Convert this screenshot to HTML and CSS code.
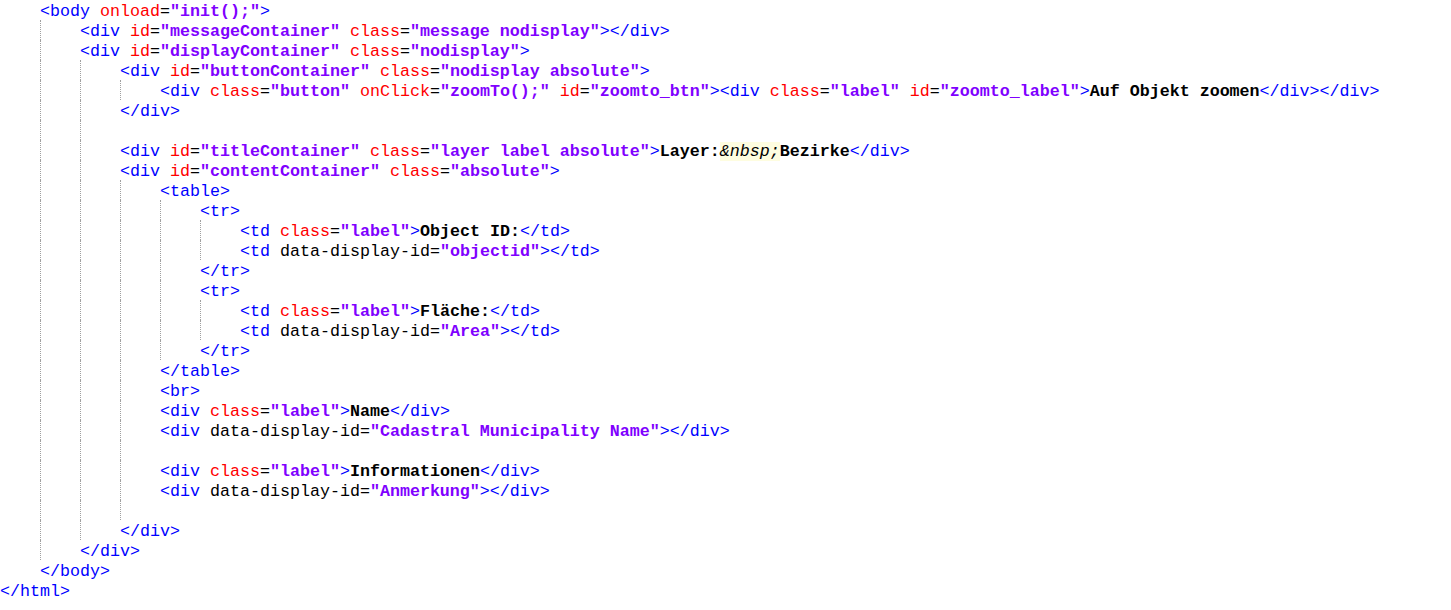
FILE: index.html
```html
<!DOCTYPE html>
<html>
<head>
<meta charset="utf-8">
<link rel="stylesheet" href="styles.css">
</head>
<body>
<div class="editor">
<div class="ln"><span class="i"></span><span class="t">&lt;body</span> <span class="a">onload</span>=<span class="s">"init();"</span><span class="t">&gt;</span></div>
<div class="ln"><span class="i"></span><span class="i g"></span><span class="t">&lt;div</span> <span class="a">id</span>=<span class="s">"messageContainer"</span> <span class="a">class</span>=<span class="s">"message nodisplay"</span><span class="t">&gt;&lt;/div&gt;</span></div>
<div class="ln"><span class="i"></span><span class="i g"></span><span class="t">&lt;div</span> <span class="a">id</span>=<span class="s">"displayContainer"</span> <span class="a">class</span>=<span class="s">"nodisplay"</span><span class="t">&gt;</span></div>
<div class="ln"><span class="i"></span><span class="i g"></span><span class="i g"></span><span class="t">&lt;div</span> <span class="a">id</span>=<span class="s">"buttonContainer"</span> <span class="a">class</span>=<span class="s">"nodisplay absolute"</span><span class="t">&gt;</span></div>
<div class="ln"><span class="i"></span><span class="i g"></span><span class="i g"></span><span class="i g"></span><span class="t">&lt;div</span> <span class="a">class</span>=<span class="s">"button"</span> <span class="a">onClick</span>=<span class="s">"zoomTo();"</span> <span class="a">id</span>=<span class="s">"zoomto_btn"</span><span class="t">&gt;&lt;div</span> <span class="a">class</span>=<span class="s">"label"</span> <span class="a">id</span>=<span class="s">"zoomto_label"</span><span class="t">&gt;</span><span class="x">Auf Objekt zoomen</span><span class="t">&lt;/div&gt;&lt;/div&gt;</span></div>
<div class="ln"><span class="i"></span><span class="i g"></span><span class="i g"></span><span class="t">&lt;/div&gt;</span></div>
<div class="ln"><span class="i"></span><span class="i g"></span><span class="i g"></span></div>
<div class="ln"><span class="i"></span><span class="i g"></span><span class="i g"></span><span class="t">&lt;div</span> <span class="a">id</span>=<span class="s">"titleContainer"</span> <span class="a">class</span>=<span class="s">"layer label absolute"</span><span class="t">&gt;</span><span class="x">Layer:</span><span class="e">&amp;nbsp;</span><span class="x">Bezirke</span><span class="t">&lt;/div&gt;</span></div>
<div class="ln"><span class="i"></span><span class="i g"></span><span class="i g"></span><span class="t">&lt;div</span> <span class="a">id</span>=<span class="s">"contentContainer"</span> <span class="a">class</span>=<span class="s">"absolute"</span><span class="t">&gt;</span></div>
<div class="ln"><span class="i"></span><span class="i g"></span><span class="i g"></span><span class="i g"></span><span class="t">&lt;table&gt;</span></div>
<div class="ln"><span class="i"></span><span class="i g"></span><span class="i g"></span><span class="i g"></span><span class="i g"></span><span class="t">&lt;tr&gt;</span></div>
<div class="ln"><span class="i"></span><span class="i g"></span><span class="i g"></span><span class="i g"></span><span class="i g"></span><span class="i g"></span><span class="t">&lt;td</span> <span class="a">class</span>=<span class="s">"label"</span><span class="t">&gt;</span><span class="x">Object ID:</span><span class="t">&lt;/td&gt;</span></div>
<div class="ln"><span class="i"></span><span class="i g"></span><span class="i g"></span><span class="i g"></span><span class="i g"></span><span class="i g"></span><span class="t">&lt;td</span> data-display-id=<span class="s">"objectid"</span><span class="t">&gt;&lt;/td&gt;</span></div>
<div class="ln"><span class="i"></span><span class="i g"></span><span class="i g"></span><span class="i g"></span><span class="i g"></span><span class="t">&lt;/tr&gt;</span></div>
<div class="ln"><span class="i"></span><span class="i g"></span><span class="i g"></span><span class="i g"></span><span class="i g"></span><span class="t">&lt;tr&gt;</span></div>
<div class="ln"><span class="i"></span><span class="i g"></span><span class="i g"></span><span class="i g"></span><span class="i g"></span><span class="i g"></span><span class="t">&lt;td</span> <span class="a">class</span>=<span class="s">"label"</span><span class="t">&gt;</span><span class="x">Fläche:</span><span class="t">&lt;/td&gt;</span></div>
<div class="ln"><span class="i"></span><span class="i g"></span><span class="i g"></span><span class="i g"></span><span class="i g"></span><span class="i g"></span><span class="t">&lt;td</span> data-display-id=<span class="s">"Area"</span><span class="t">&gt;&lt;/td&gt;</span></div>
<div class="ln"><span class="i"></span><span class="i g"></span><span class="i g"></span><span class="i g"></span><span class="i g"></span><span class="t">&lt;/tr&gt;</span></div>
<div class="ln"><span class="i"></span><span class="i g"></span><span class="i g"></span><span class="i g"></span><span class="t">&lt;/table&gt;</span></div>
<div class="ln"><span class="i"></span><span class="i g"></span><span class="i g"></span><span class="i g"></span><span class="t">&lt;br&gt;</span></div>
<div class="ln"><span class="i"></span><span class="i g"></span><span class="i g"></span><span class="i g"></span><span class="t">&lt;div</span> <span class="a">class</span>=<span class="s">"label"</span><span class="t">&gt;</span><span class="x">Name</span><span class="t">&lt;/div&gt;</span></div>
<div class="ln"><span class="i"></span><span class="i g"></span><span class="i g"></span><span class="i g"></span><span class="t">&lt;div</span> data-display-id=<span class="s">"Cadastral Municipality Name"</span><span class="t">&gt;&lt;/div&gt;</span></div>
<div class="ln"><span class="i"></span><span class="i g"></span><span class="i g"></span><span class="i g"></span></div>
<div class="ln"><span class="i"></span><span class="i g"></span><span class="i g"></span><span class="i g"></span><span class="t">&lt;div</span> <span class="a">class</span>=<span class="s">"label"</span><span class="t">&gt;</span><span class="x">Informationen</span><span class="t">&lt;/div&gt;</span></div>
<div class="ln"><span class="i"></span><span class="i g"></span><span class="i g"></span><span class="i g"></span><span class="t">&lt;div</span> data-display-id=<span class="s">"Anmerkung"</span><span class="t">&gt;&lt;/div&gt;</span></div>
<div class="ln"><span class="i"></span><span class="i g"></span><span class="i g"></span><span class="i g"></span></div>
<div class="ln"><span class="i"></span><span class="i g"></span><span class="i g"></span><span class="t">&lt;/div&gt;</span></div>
<div class="ln"><span class="i"></span><span class="i g"></span><span class="t">&lt;/div&gt;</span></div>
<div class="ln"><span class="i"></span><span class="t">&lt;/body&gt;</span></div>
<div class="ln"><span class="t">&lt;/html&gt;</span></div>
</div>
</body>
</html>
```

FILE: styles.css
```css
html, body {
  margin: 0;
  padding: 0;
  background: #ffffff;
}

.editor {
  font-family: "Liberation Mono", "Courier New", monospace;
  font-size: 16.667px;
  color: #000000;
}

.ln {
  display: block;
  height: 20px;
  line-height: 23px;
  white-space: pre;
}

.i {
  display: inline-block;
  width: 40px;
  height: 20px;
  vertical-align: top;
  box-sizing: border-box;
}

.i.g {
  border-left: 1px dotted #a0a0a0;
}

.t {
  color: #0000ff;
}

.a {
  color: #ff0000;
}

.s {
  color: #8000ff;
  font-weight: bold;
}

.x {
  font-weight: bold;
}

.e {
  font-style: italic;
  background: #fefde0;
}
```
